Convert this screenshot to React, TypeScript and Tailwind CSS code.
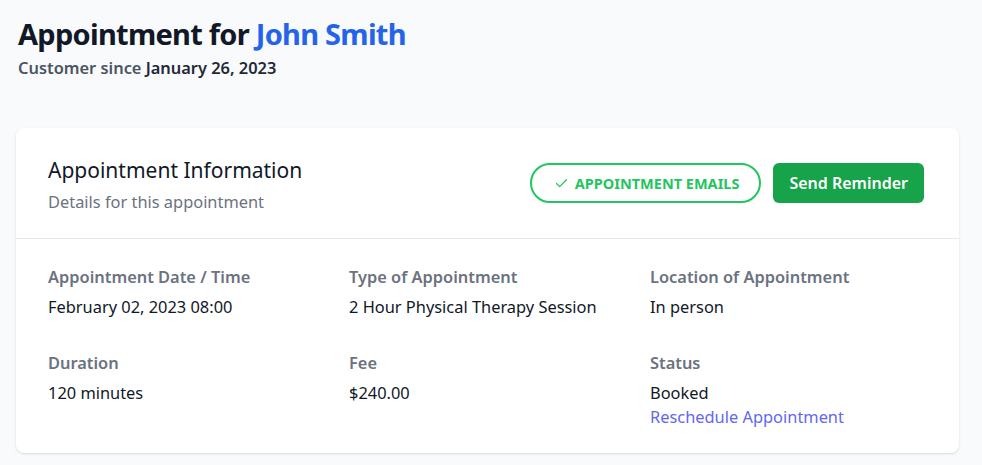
import { Check } from 'lucide-react';

const details = [
  { label: 'Appointment Date / Time', value: 'February 02, 2023 08:00' },
  { label: 'Type of Appointment', value: '2 Hour Physical Therapy Session' },
  { label: 'Location of Appointment', value: 'In person' },
  { label: 'Duration', value: '120 minutes' },
  { label: 'Fee', value: '$240.00' },
];

const App = () => {
  return (
    <div className="min-h-screen bg-[#f9fafb] pl-4 pr-[23px] pt-4 pb-4 font-['Noto_Sans',sans-serif] text-[#111827]">
      <h1 className="pl-0.5 text-[29px] font-bold leading-9 tracking-[-0.025em]">
        Appointment for <span className="text-[#2563eb]">John Smith</span>
      </h1>
      <p className="mt-1 pl-0.5 text-[16.4px] leading-6 font-semibold text-[#4b5563]">
        Customer since <span className="text-[#1f2937]">January 26, 2023</span>
      </p>

      <div className="mt-12 rounded-lg bg-white shadow">
        {/* Header */}
        <div className="flex items-center justify-between border-b border-[#e5e7eb] pl-8 pr-[35px] pt-7 pb-6">
          <div>
            <h2 className="text-[21px] leading-7 font-normal">Appointment Information</h2>
            <p className="mt-1.5 text-[16.4px] leading-6 text-[#6b7280]">Details for this appointment</p>
          </div>
          <div className="mb-1 flex items-center gap-3">
            <button className="flex items-center gap-1.5 rounded-full border-2 border-[#22c55e] py-2 pl-[22px] pr-5 text-[14.5px] leading-5 font-bold uppercase text-[#22c55e]">
              <Check size={15} strokeWidth={2} />
              Appointment Emails
            </button>
            <button className="rounded-md bg-[#16a34a] px-4 py-2 leading-6 font-semibold text-white">
              Send Reminder
            </button>
          </div>
        </div>

        {/* Details */}
        <div className="grid grid-cols-3 gap-x-6 gap-y-8 px-8 pt-[26px] pb-6 text-[16.4px] leading-6">
          {details.map(d => (
            <div key={d.label}>
              <p className="font-semibold text-[#6b7280]">{d.label}</p>
              <p className="mt-1.5">{d.value}</p>
            </div>
          ))}
          <div>
            <p className="font-semibold text-[#6b7280]">Status</p>
            <p className="mt-1.5">Booked</p>
            <a href="#" className="block text-[#6366f1]">Reschedule Appointment</a>
          </div>
        </div>
      </div>
    </div>
  );
};

export default App;
